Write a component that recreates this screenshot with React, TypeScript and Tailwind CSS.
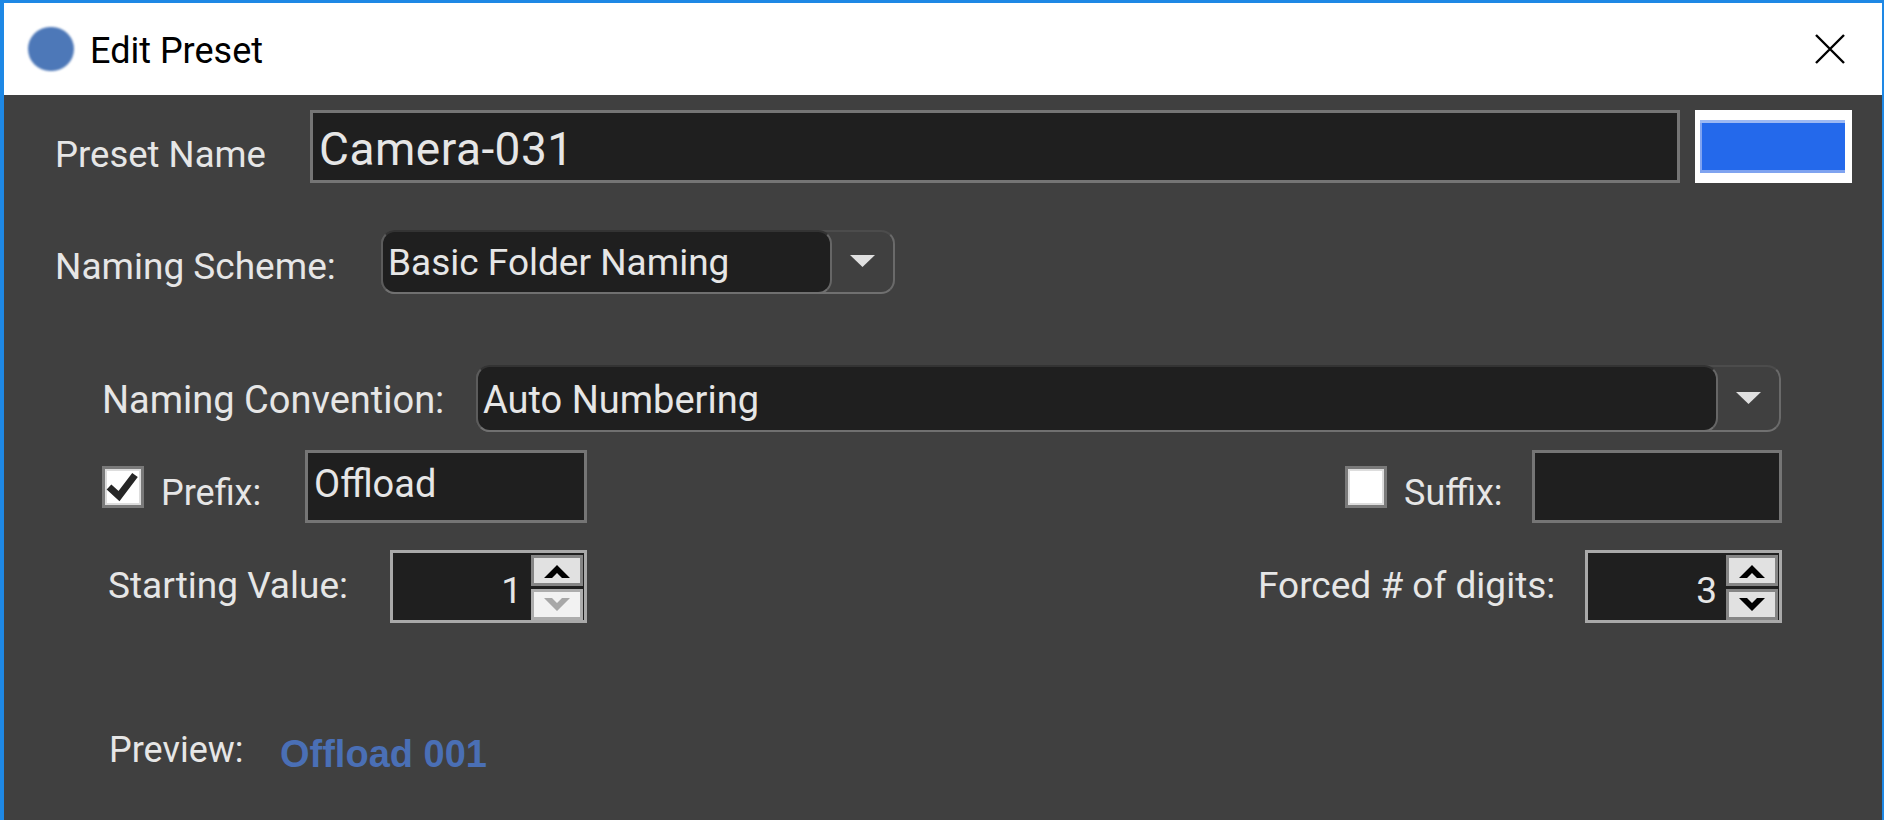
const uiFont = "font-['Roboto','Liberation_Sans',sans-serif]";

function Combo({ text, outer, inner, size }: { text: string; outer: string; inner: string; size: string }) {
  return (
    <div className={`flex rounded-[14px] border-2 border-t-[#4c4c4c] border-l-[#555555] border-r-[#6a6a6a] border-b-[#707070] ${outer}`}>
      <div className={`-my-[2px] -ml-[2px] flex items-center rounded-[14px] border-2 border-t-[#333333] border-l-[#5c5c5c] border-r-[#666666] border-b-[#707070] bg-[#1f1f1f] pl-[5px] ${inner}`}>
        <span className={`text-[#e6e6e6] ${size}`}>{text}</span>
      </div>
      <div className="flex flex-1 items-center justify-center pb-[2px]">
        <svg width="25" height="12" viewBox="0 0 25 12"><path d="M0 0h25L12.5 12z" fill="#e0e0e0" /></svg>
      </div>
    </div>
  );
}

function Check({ checked }: { checked?: boolean }) {
  return (
    <div className="flex h-[42px] w-[42px] items-center justify-center border-[3px] border-[#7a7a7a] bg-white shadow-[inset_0_0_0_2px_#dddddd]">
      {checked && (
        <svg width="34" height="30" viewBox="0 0 34 30">
          <path d="M3 15l10 9L29 3" fill="none" stroke="#262626" strokeWidth="7" />
        </svg>
      )}
    </div>
  );
}

function Spin({ value, disabledDown }: { value: string; disabledDown?: boolean }) {
  return (
    <div className="flex h-[73px] w-[197px] border-[3px] border-[#a9a9a9] bg-[#1f1f1f]">
      <div className="flex flex-1 items-center justify-end pr-[9px] pt-[8px] text-[#e6e6e6]">{value}</div>
      <div className="flex w-[53px] flex-col">
        <div className="mt-[2px] mr-[1px] flex h-[31px] items-center justify-center border-[3px] border-[#858585] bg-[#e1e1e1]">
          <svg width="26" height="14" viewBox="0 0 26 14"><path d="M0 14L13 1l13 13h-8l-5-5-5 5z" fill="#000" /></svg>
        </div>
        <div className={`mr-[1px] mt-[3px] flex h-[31px] items-center justify-center border-[3px] ${disabledDown ? "border-[#adadad] bg-[#f2f2f2]" : "border-[#858585] bg-[#e1e1e1]"}`}>
          <svg width="26" height="14" viewBox="0 0 26 14"><path d="M0 0l13 13L26 0h-8l-5 5-5-5z" fill={disabledDown ? "#a8a8a8" : "#000"} /></svg>
        </div>
      </div>
    </div>
  );
}

export default function App() {
  return (
    <div className={`h-[820px] w-[1887px] overflow-hidden bg-white pr-[3px] text-[37px] leading-none ${uiFont}`}>
      <div className="flex h-full flex-col border-l-[4px] border-r-[2px] border-t-[3px] border-l-[#1e88e5] border-r-[#1e88e5] border-t-[#1e88e5]">
        <div className="flex h-[92px] items-center bg-white pl-[24px] pr-[37px]">
          <div className="h-[44px] w-[46px] rounded-full bg-[#4d78b8] blur-[1px]" />
          <span className="ml-[16px] flex-1 pt-[3px] text-[36px] text-black">Edit Preset</span>
          <svg width="30" height="30" viewBox="0 0 30 30"><path d="M1 1l28 28M29 1L1 29" stroke="#000" strokeWidth="2.4" /></svg>
        </div>

        <div className="flex-1 bg-[#404040] text-[#e6e6e6]">
          <div className="mt-[15px] flex items-center pl-[51px]">
            <span className="w-[255px] pt-[18px] text-[36.5px]">Preset Name</span>
            <div className="flex h-[73px] w-[1370px] items-center border-[3px] border-[#757575] bg-[#1f1f1f] pl-[6px] pt-[4px] text-[46px] tracking-[0.5px]">Camera-031</div>
            <div className="ml-[15px] h-[73px] w-[157px] border-l-[5px] border-r-[7px] border-t-[10px] border-b-[10px] border-white bg-[#2469eb] shadow-[inset_0_3px_0_#9db9f3,inset_2px_0_0_#7fa3f0,inset_0_-3px_0_#7fa3f0]" />
          </div>

          <div className="mt-[47px] flex items-center pl-[51px]">
            <span className="w-[326px] pt-[8px]">Naming Scheme:</span>
            <Combo text="Basic Folder Naming" size="text-[37px]" outer="h-[64px] w-[514px]" inner="h-[64px] w-[451px]" />
          </div>

          <div className="mt-[71px] flex items-center pl-[98px]">
            <span className="w-[374px] pt-[2px] text-[38px]">Naming Convention:</span>
            <Combo text="Auto Numbering" size="text-[38px] pt-[2px]" outer="h-[67px] w-[1305px]" inner="h-[67px] w-[1242px]" />
          </div>

          <div className="mt-[18px] flex items-center justify-between pl-[98px] pr-[100px]">
            <div className="flex items-center">
              <Check checked />
              <span className="ml-[17px] w-[144px] pt-[12px] text-[36px]">Prefix:</span>
              <div className="h-[73px] w-[282px] border-[3px] border-[#757575] bg-[#1f1f1f] pl-[6px] pt-[12px] text-[38px]">Offload</div>
            </div>
            <div className="flex items-center">
              <Check />
              <span className="ml-[17px] w-[128px] pt-[12px] text-[36px]">Suffix:</span>
              <div className="h-[73px] w-[250px] border-[3px] border-[#757575] bg-[#1f1f1f]" />
            </div>
          </div>

          <div className="mt-[27px] flex items-center justify-between pl-[104px] pr-[100px]">
            <div className="flex items-center">
              <span className="w-[282px] pb-[2px]">Starting Value:</span>
              <Spin value="1" disabledDown />
            </div>
            <div className="flex items-center">
              <span className="w-[327px] pb-[2px] text-[37px]">Forced # of digits:</span>
              <Spin value="3" />
            </div>
          </div>

          <div className="mt-[104px] flex items-center pl-[105px]">
            <span className="w-[171px] text-[36px]">Preview:</span>
            <span className="pt-[8px] font-['Liberation_Sans',sans-serif] text-[38px] font-bold text-[#4a6fb5]">Offload 001</span>
          </div>
        </div>
      </div>
    </div>
  );
}
